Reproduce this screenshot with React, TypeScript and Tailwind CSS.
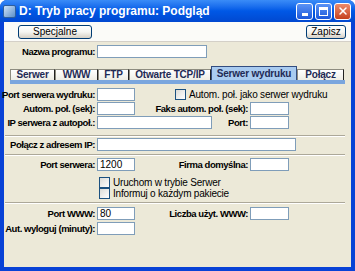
import { X } from "lucide-react";

const labelCls =
  "flex shrink-0 justify-end font-bold text-[9.5px] tracking-[-0.45px] leading-none text-black whitespace-nowrap";
const inputCls =
  "h-[13px] shrink-0 bg-white border border-[#7f9db9] text-[10px] leading-[11px] px-[2px] text-black";

function Field({ w, value }: { w: number; value?: string }) {
  return (
    <div className={inputCls} style={{ width: w }}>
      {value}
    </div>
  );
}

function Check({ label }: { label: string }) {
  return (
    <div className="flex h-[11px] items-center gap-[3px]">
      <div className="h-[11px] w-[11px] border border-[#1c5180] bg-gradient-to-br from-[#dcdcd7] to-white" />
      <span className="text-[10px] leading-none tracking-[-0.2px] text-black">{label}</span>
    </div>
  );
}

function Sep() {
  return <div className="ml-[1px] mr-[6px] h-0 border-t border-b border-t-[#aca899] border-b-white" />;
}

function XpButton({ label, w }: { label: string; w: number }) {
  return (
    <div
      className="flex h-[14px] items-center justify-center rounded-[3px] border border-[#003c74] bg-gradient-to-b from-white via-[#f5f5f1] to-[#d6d0c5] text-[10px] text-black"
      style={{ width: w }}
    >
      {label}
    </div>
  );
}

const tabs = ["Serwer", "WWW", "FTP", "Otwarte TCP/IP", "Serwer wydruku", "Połącz"];
const tabW = [45, 43, 31, 82, 86, 47];

export default function App() {
  return (
    <div
      className="flex h-[271px] w-[355px] flex-col overflow-hidden rounded-t-[7px] bg-[#0842d6]"
      style={{ fontFamily: "'Liberation Sans', Arial, sans-serif" }}
    >
      {/* Title bar */}
      <div className="flex h-[22px] items-center bg-gradient-to-b from-[#3a8cf7] via-[#0058e6] to-[#0148d0] pl-[3px] pr-[4px]">
        <div className="h-[13px] w-[13px] rounded-[2px] border border-[#2f5f9c] bg-gradient-to-br from-[#cfe3f7] to-[#5a8fc9]" />
        <span className="ml-[3px] text-[12px] font-bold text-white">D: Tryb pracy programu: Podgląd</span>
        <div className="ml-auto flex gap-[2px]">
          <div className="flex h-[17px] w-[17px] items-end justify-center rounded-[3px] border border-white bg-gradient-to-b from-[#5b93f5] to-[#1c57da] pb-[3px]">
            <div className="h-[3px] w-[6px] bg-white" />
          </div>
          <div className="flex h-[17px] w-[17px] items-center justify-center rounded-[3px] border border-white bg-gradient-to-b from-[#5b93f5] to-[#1c57da]">
            <div className="h-[9px] w-[9px] border border-t-[3px] border-white" />
          </div>
          <div className="flex h-[17px] w-[17px] items-center justify-center rounded-[3px] border border-white bg-gradient-to-b from-[#ec8a6a] to-[#c5401b]">
            <X className="h-[12px] w-[12px] text-white" strokeWidth={3} />
          </div>
        </div>
      </div>

      {/* Body */}
      <div className="mx-[4px] mb-[4px] flex flex-1 flex-col bg-[#ece9d8]">
        {/* Toolbar */}
        <div className="flex h-[20px] items-center justify-between border-b border-[#d4d0c8] bg-[#fbfbf8] pl-[14px] pr-[5px]">
          <XpButton label="Specjalne" w={74} />
          <XpButton label="Zapisz" w={40} />
        </div>

        <div className="mt-[3px] flex items-center">
          <div className={labelCls + " w-[93px] pr-[2px]"}>Nazwa programu:</div>
          <Field w={110} />
        </div>

        {/* Tabs */}
        <div className="mx-[6px] mt-[9px] flex flex-col">
          <div className="flex h-[13px] items-end">
            {tabs.map((t, i) => (
              <div
                key={t}
                className={
                  "flex items-center justify-center border border-b-0 text-[10px] font-bold leading-none tracking-[-0.2px] text-[#1f2a55] " +
                  (i === 4
                    ? "h-[14px] border-[#334d80] bg-[#a9cbf0]"
                    : "h-[11px] border-[#8e8c80] border-r-[#222] bg-gradient-to-b from-white to-[#eeede5]")
                }
                style={{ width: tabW[i] }}
              >
                {t}
              </div>
            ))}
          </div>
          <div className="h-[4px] bg-[#7aa6de]" />
        </div>

        {/* Print server */}
        <div className="mt-[4px] flex flex-col gap-[1px]">
          <div className="flex items-center">
            <div className={labelCls + " w-[93px] pr-[2px]"}>Port serwera wydruku:</div>
            <Field w={38} />
            <div className="ml-[40px]">
              <Check label="Autom. poł. jako serwer wydruku" />
            </div>
          </div>
          <div className="flex items-center">
            <div className={labelCls + " w-[93px] pr-[2px]"}>Autom. poł. (sek):</div>
            <Field w={38} />
            <div className={labelCls + " w-[115px] pr-[2px]"}>Faks autom. poł. (sek):</div>
            <Field w={39} />
          </div>
          <div className="flex items-center">
            <div className={labelCls + " w-[93px] pr-[2px]"}>IP serwera z autopoł.:</div>
            <Field w={115} />
            <div className={labelCls + " w-[38px] pr-[2px]"}>Port:</div>
            <Field w={39} />
          </div>
        </div>

        <div className="mt-[6px]">
          <Sep />
        </div>

        <div className="mt-[1px] flex items-center">
          <div className={labelCls + " w-[93px] pr-[2px]"}>Połącz z adresem IP:</div>
          <Field w={199} />
        </div>

        <div className="mt-[3px]">
          <Sep />
        </div>

        <div className="mt-[2px] flex flex-col">
          <div className="flex items-center">
            <div className={labelCls + " w-[93px] pr-[2px]"}>Port serwera:</div>
            <Field w={38} value="1200" />
            <div className={labelCls + " w-[115px] pr-[2px]"}>Firma domyślna:</div>
            <Field w={39} />
          </div>
          <div className="ml-[95px] mt-[6px] flex flex-col gap-[0px]">
            <Check label="Uruchom w trybie Serwer" />
            <Check label="Informuj o każdym pakiecie" />
          </div>
        </div>

        <div className="mt-[3px]">
          <Sep />
        </div>

        <div className="mt-[3px] flex flex-col gap-[2px]">
          <div className="flex items-center">
            <div className={labelCls + " w-[93px] pr-[2px]"}>Port WWW:</div>
            <Field w={38} value="80" />
            <div className={labelCls + " w-[115px] pr-[2px]"}>Liczba użyt. WWW:</div>
            <Field w={39} />
          </div>
          <div className="flex items-center">
            <div className={labelCls + " w-[93px] pr-[2px]"}>Aut. wyloguj (minuty):</div>
            <Field w={38} />
          </div>
        </div>
      </div>
    </div>
  );
}
